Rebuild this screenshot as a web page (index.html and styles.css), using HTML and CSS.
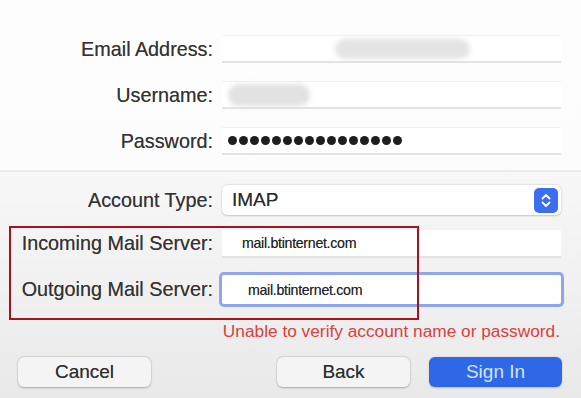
FILE: index.html
```html
<!DOCTYPE html>
<html>
<head>
<meta charset="utf-8">
<link rel="stylesheet" href="styles.css">
</head>
<body>
<div class="window">
  <section class="top">
    <div class="row">
      <label class="label">Email Address:</label>
      <div class="field"><span class="blur blur-email"></span></div>
    </div>
    <div class="row">
      <label class="label">Username:</label>
      <div class="field"><span class="blur blur-user"></span></div>
    </div>
    <div class="row">
      <label class="label">Password:</label>
      <div class="field dots">
        <i></i><i></i><i></i><i></i><i></i><i></i><i></i><i></i>
        <i></i><i></i><i></i><i></i><i></i><i></i><i></i><i></i>
      </div>
    </div>
  </section>
  <div class="divider"></div>
  <section class="bottom">
    <div class="row row-popup">
      <label class="label">Account Type:</label>
      <div class="popup">
        <span class="popup-value">IMAP</span>
        <span class="stepper">
          <svg width="12" height="17" viewBox="0 0 12 17"><path d="M2.5 6.5 L6 3 L9.5 6.5 M2.5 10.5 L6 14 L9.5 10.5" fill="none" stroke="#fff" stroke-width="1.8" stroke-linecap="round" stroke-linejoin="round"/></svg>
        </span>
      </div>
    </div>
    <div class="row row-in">
      <label class="label">Incoming Mail Server:</label>
      <div class="field server in">mail.btinternet.com</div>
    </div>
    <div class="row row-out">
      <label class="label">Outgoing Mail Server:</label>
      <div class="field server out focus">mail.btinternet.com</div>
    </div>
    <p class="error">Unable to verify account name or password.</p>
    <div class="buttons">
      <button class="btn">Cancel</button>
      <div class="btn-group">
        <button class="btn">Back</button>
        <button class="btn primary">Sign In</button>
      </div>
    </div>
  </section>
  <div class="highlight"></div>
</div>
</body>
</html>
```

FILE: styles.css
```css
html, body {
  margin: 0;
  padding: 0;
}
body {
  width: 581px;
  height: 398px;
  overflow: hidden;
  font-family: "Liberation Sans", Arial, sans-serif;
  color: #3b3b3b;
}
.window {
  position: relative;
  width: 581px;
  height: 398px;
  background: linear-gradient(#fdfdfd 0px, #fcfcfc 170px, #f7f7f7 172px, #f0f0f0 300px, #e9e9e9 398px);
  display: flex;
  flex-direction: column;
}
.top {
  padding: 35px 20px 0 0;
  display: flex;
  flex-direction: column;
  gap: 18px;
}
.row {
  display: grid;
  grid-template-columns: 213px 1fr;
  column-gap: 9px;
  align-items: center;
}
.label {
  text-align: right;
  font-size: 19.8px;
  color: #333333;
  white-space: nowrap;
  text-shadow: 0 0 0.6px rgba(40, 40, 40, 0.6);
}
.field {
  position: relative;
  height: 28px;
  box-sizing: border-box;
  background: #ffffff;
  border-top: 1px solid #f1f1f1;
  border-bottom: 2px solid #e3e3e3;
  display: flex;
  align-items: center;
}
.blur {
  position: absolute;
  background: #e4e4e4;
  border-radius: 12px;
  filter: blur(2.5px);
}
.blur-email {
  left: 113px;
  top: 3px;
  width: 135px;
  height: 20px;
}
.blur-user {
  left: 6px;
  top: 2px;
  width: 82px;
  height: 22px;
  background: #e2e2e2;
}
.dots {
  gap: 2px;
  padding-left: 6px;
}
.dots i {
  display: block;
  width: 9px;
  height: 9px;
  border-radius: 50%;
  background: #1e1e1e;
}
.divider {
  margin-top: 15px;
  height: 2px;
  background: #ebebeb;
}
.bottom {
  padding: 13px 20px 0 0;
  display: flex;
  flex-direction: column;
}
.popup {
  height: 30px;
  box-sizing: border-box;
  background: #ffffff;
  border-radius: 5px;
  box-shadow: 0 0.5px 2px rgba(0,0,0,0.18), 0 0 0 0.5px rgba(0,0,0,0.05);
  display: flex;
  align-items: center;
  justify-content: space-between;
  padding: 0 3px 0 10px;
}
.popup-value {
  font-size: 19px;
  color: #2a2a2a;
  text-shadow: 0 0 0.6px rgba(40, 40, 40, 0.6);
}
.stepper {
  width: 24px;
  height: 25px;
  border-radius: 5px;
  background: #3b6ff0;
  display: flex;
  align-items: center;
  justify-content: center;
}
.row-in {
  margin-top: 14px;
}
.row-out {
  margin-top: 17px;
}
.server {
  font-size: 14.2px;
  color: #222222;
  letter-spacing: -0.3px;
  text-shadow: 0 0 0.4px rgba(30, 30, 30, 0.5);
}
.server.in {
  height: 29px;
  padding-left: 20px;
}
.server.out {
  height: 29px;
  padding-left: 26px;
  border: none;
}
.focus {
  border-radius: 2px;
  box-shadow: 0 0 0 3px rgba(110, 140, 238, 0.75);
}
.error {
  margin: 17px 0 0 0;
  text-align: right;
  font-size: 17.3px;
  color: #d8413f;
  padding-right: 1px;
}
.buttons {
  margin-top: 15px;
  padding-left: 18px;
  display: flex;
  justify-content: space-between;
  align-items: center;
  margin-right: -1px;
}
.btn-group {
  display: flex;
  gap: 19px;
}
.btn {
  width: 133px;
  height: 30px;
  border: none;
  border-radius: 6px;
  background: #f4f4f4;
  box-shadow: 0 0.5px 2px rgba(0,0,0,0.25), 0 0 0 0.5px rgba(0,0,0,0.08);
  font-family: "Liberation Sans", Arial, sans-serif;
  font-size: 19px;
  color: #2e2e2e;
  text-shadow: 0 0 0.6px rgba(40, 40, 40, 0.6);
  padding: 0;
}
.btn.primary {
  background: #2f68e6;
  color: #d6e2ff;
  text-shadow: none;
  box-shadow: 0 0.5px 2px rgba(0,0,0,0.2);
}
.highlight {
  position: absolute;
  left: 9px;
  top: 226px;
  width: 410px;
  height: 94px;
  box-sizing: border-box;
  border: 2px solid #a3141d;
  pointer-events: none;
}
```
